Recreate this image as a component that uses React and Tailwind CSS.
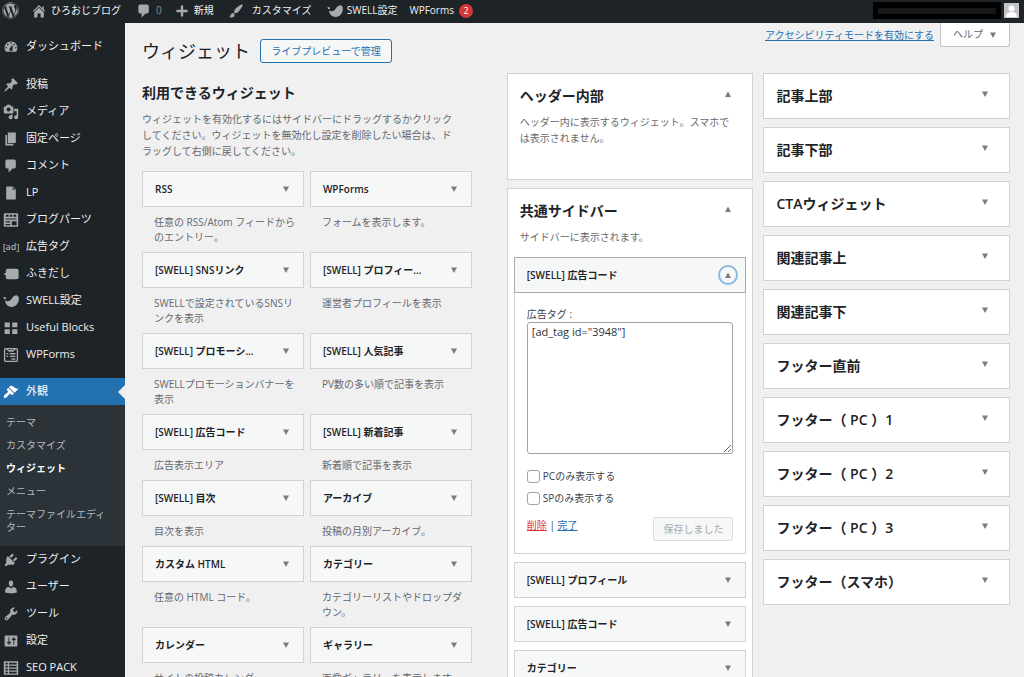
import React, { useState } from "react";
import { FaWordpress } from "react-icons/fa";

const ICONS = {
  dashboard:
    "M3.76 16h12.48c1.1-1.37 1.76-3.11 1.76-5 0-4.42-3.58-8-8-8s-8 3.58-8 8c0 1.89.66 3.63 1.76 5zM10 4c.55 0 1 .45 1 1s-.45 1-1 1-1-.45-1-1 .45-1 1-1zM6 6c.55 0 1 .45 1 1s-.45 1-1 1-1-.45-1-1 .45-1 1-1zm8 0c.55 0 1 .45 1 1s-.45 1-1 1-1-.45-1-1 .45-1 1-1zm-5.37 5.55L12 7v6c0 1.1-.9 2-2 2s-2-.9-2-2c0-.57.24-1.08.63-1.45zM4 10c.55 0 1 .45 1 1s-.45 1-1 1-1-.45-1-1 .45-1 1-1zm12 0c.55 0 1 .45 1 1s-.45 1-1 1-1-.45-1-1 .45-1 1-1z",
  home: "M16 8.5l1.53 1.53-1.06 1.06L10 4.6l-6.47 6.49-1.06-1.06L10 2.5l4 4v-2h2v4zm-6-2.46l6 5.99V18h-4v-5H8v5H4v-5.97z",
  pin: "M10.44 3.02l1.82-1.82 6.36 6.35-1.83 1.82c-1.05-.68-2.48-.57-3.41.36l-.75.75c-.92.93-1.04 2.35-.35 3.41l-1.83 1.82-2.41-2.41-2.8 2.79c-.42.42-3.38 2.71-3.8 2.29s1.86-3.39 2.28-3.81l2.79-2.79L4.1 9.36l1.83-1.82c1.05.69 2.48.57 3.4-.36l.75-.75c.93-.92 1.05-2.35.36-3.41z",
  media:
    "M13 11V4c0-.55-.45-1-1-1h-1.67L9 1H5L3.67 3H2c-.55 0-1 .45-1 1v7c0 .55.45 1 1 1h10c.55 0 1-.45 1-1zM7 4.5c1.38 0 2.5 1.12 2.5 2.5S8.38 9.5 7 9.5 4.5 8.38 4.5 7 5.62 4.5 7 4.5zM14 6h5v10.5c0 1.38-1.12 2.5-2.5 2.5S14 17.88 14 16.5s1.12-2.5 2.5-2.5c.17 0 .34.02.5.05V9h-3V6zm-4 8.05V13h2v3.5c0 1.38-1.12 2.5-2.5 2.5S7 17.88 7 16.5 8.12 14 9.5 14c.17 0 .34.02.5.05z",
  page: "M6 15V2h10v13H6zm-1 1h8v2H3V5h2v11z",
  comment:
    "M5 2h9c1.1 0 2 .9 2 2v7c0 1.1-.9 2-2 2h-2l-5 5v-5H5c-1.1 0-2-.9-2-2V4c0-1.1.9-2 2-2z",
  file: "M12 2l4 4v12H4V2h8zm0 4h3l-3-3v3z",
  parts:
    "M2 1.500h16c.6 0 1 .4 1 1v15c0 .6-.4 1-1 1H2c-.6 0-1-.4-1-1v-15c0-.6.4-1 1-1zM3.500 3.500V6H7V3.500zm5 0V6h3V3.500zm4.500 0V6h3.500V3.500zM3 8v1.300h14V8zM3 11.500V13h6v-1.500zM3 15v1.500h6V15zm8-3.500v5h6v-5z",
  balloon:
    "M6 3.500h11c1.400 0 2.500 1 2.500 2.500v8c0 1.500-1.100 2.500-2.500 2.500H6c-1.500 0-2.500-1-2.500-2.500v-2.500L.5 10l3-1.500V6c0-1.500 1-2.500 2.500-2.500z",
  swell:
    "M.5 5.500c1.200-.8 2.800-.5 3.500 1L2.500 8C1.500 7.500.8 6.600.5 5.500zM2.500 9.500c3.500 1.500 6.500.7 8.500-2.500 1.500-2.700 4-4.300 6.500-4 1.500.2 2.300 1.600 2.300 4C19.800 13 16 17.500 11 17.500c-4.500 0-8-3-8.500-8z",
  blocks:
    "M8.500 9V3H2v6h6.500zM18 9V3h-6.500v6H18zM8.500 17.500v-6H2v6h6.500zm9.500 0v-6h-6.500v6H18z",
  appearance:
    "M14.48 11.06L7.41 3.99l1.5-1.5c.5-.56 2.3-.47 3.51.32 1.21.8 1.43 1.28 2.91 2.1 1.18.64 2.45 1.26 4.45.85zm-.71.71L6.7 4.7 4.93 6.47c-.39.39-.39 1.02 0 1.41l1.06 1.06c.39.39.39 1.03 0 1.42-.6.6-1.43 1.11-2.21 1.69-.35.26-.7.53-1.01.84C1.43 14.23.4 16.08 1.4 17.07c.99 1 2.84-.03 4.18-1.36.31-.31.58-.66.85-1.02.57-.78 1.08-1.61 1.69-2.21.39-.39 1.02-.39 1.41 0l1.06 1.06c.39.39 1.02.39 1.41 0z",
  plugins:
    "M13.11 4.36L9.87 7.6 8 5.73l3.24-3.24c.35-.34 1.05-.2 1.56.32.52.51.66 1.21.31 1.55zm-8 1.77l.91-1.12 9.01 9.01-1.19.84c-.71.71-2.63 1.16-3.82 1.16H6.14L4.9 17.26c-.59.59-1.54.59-2.12 0-.59-.58-.59-1.53 0-2.12l1.24-1.24v-3.88c0-1.13.4-3.19 1.09-3.89zm7.26 3.97l3.24-3.24c.34-.35 1.04-.21 1.55.31.52.51.66 1.21.31 1.55l-3.24 3.25z",
  users:
    "M10 9.25c-2.27 0-2.73-3.44-2.73-3.44C7 4.02 7.82 2 9.97 2c2.16 0 2.98 2.02 2.71 3.81 0 0-.41 3.44-2.68 3.44zm0 2.57L12.72 10c2.39 0 4.52 2.33 4.52 4.53v2.49s-3.65 1.13-7.24 1.13c-3.65 0-7.24-1.13-7.24-1.13v-2.49c0-2.25 1.94-4.48 4.47-4.48z",
  tools:
    "M16.68 9.77c-1.34 1.34-3.3 1.67-4.95.99l-5.41 6.52c-.99.99-2.59.99-3.58 0s-.99-2.59 0-3.57l6.52-5.42c-.68-1.65-.35-3.61.99-4.95 1.28-1.28 3.12-1.62 4.72-1.06l-2.89 2.89 2.82 2.82 2.86-2.87c.53 1.58.18 3.39-1.08 4.65zM3.81 16.21c.4.39 1.04.39 1.43 0 .4-.4.4-1.04 0-1.43-.39-.4-1.03-.4-1.43 0-.39.39-.39 1.03 0 1.43z",
  settings:
    "M18 16V4c0-.55-.45-1-1-1H3c-.55 0-1 .45-1 1v12c0 .55.45 1 1 1h14c.55 0 1-.45 1-1zM8 11h1c.55 0 1 .45 1 1s-.45 1-1 1H8v1.5c0 .28-.22.5-.5.5s-.5-.22-.5-.5V13H6c-.55 0-1-.45-1-1s.45-1 1-1h1V5.5c0-.28.22-.5.5-.5s.5.22.5.5V11zm5-2h-1c-.55 0-1-.45-1-1s.45-1 1-1h1V5.5c0-.28.22-.5.5-.5s.5.22.5.5V7h1c.55 0 1 .45 1 1s-.45 1-1 1h-1v5.5c0 .28-.22.5-.5.5s-.5-.22-.5-.5V9z",
  list: "M1 1.500h18v17H1zm2 2v2h3v-2zm4.500 0v2H17v-2zM3 7.300v2h3v-2zm4.500 0v2H17v-2zM3 11v2h3v-2zm4.500 0v2H17v-2zM3 14.800v2h3v-2zm4.500 0v2H17v-2z",
  plus: "M8.500 3h3v5.500H17v3h-5.500V17h-3v-5.500H3v-3h5.500z",
  brush:
    "M18.33 3.57s.27-.8-.31-1.36c-.53-.52-1.22-.24-1.22-.24-.61.3-5.76 3.47-7.67 5.57-.86.96-2.06 3.79-1.09 4.82.92.98 3.96-.17 4.79-1 2.06-2.06 5.21-7.17 5.5-7.79zM1.4 17.65c2.37-1.56 1.46-3.41 3.23-4.64.93-.65 2.22-.62 3.08.29.63.67.8 2.57-.16 3.46-1.57 1.45-4 1.55-6.15.89z",
};

const Icon = ({ name, className = "" }) => (
  <svg
    viewBox="0 0 20 20"
    fill="currentColor"
    fillRule="evenodd"
    className={`size-4 shrink-0 ${className}`}
    aria-hidden="true"
  >
    <path d={ICONS[name]} />
  </svg>
);

const FormsIcon = () => (
  <svg
    viewBox="0 0 20 20"
    fill="none"
    stroke="currentColor"
    strokeWidth="1.7"
    className="size-4 shrink-0"
    aria-hidden="true"
  >
    <rect x="2" y="2" width="16" height="16" rx="1.5" />
    <path d="M4.500 2.500l4 3 1.500-1.500 1.500 1.500 4-3M4.500 8.500h2M8.500 8.500h7M4.500 11.800h2M8.500 11.800h7M10.500 15h5" />
  </svg>
);

const Arrow = ({ up = false }) => (
  <svg
    viewBox="0 0 8 8"
    className="size-2 shrink-0 fill-[#787c82]"
    aria-hidden="true"
  >
    <path d={up ? "M4 1.500L7 7H1z" : "M4 7L1 1.500h6z"} />
  </svg>
);

const mainMenu = [
  { label: "投稿", icon: "pin" },
  { label: "メディア", icon: "media" },
  { label: "固定ページ", icon: "page" },
  { label: "コメント", icon: "comment" },
  { label: "LP", icon: "file" },
  { label: "ブログパーツ", icon: "parts" },
  { label: "広告タグ", icon: "ad" },
  { label: "ふきだし", icon: "balloon" },
  { label: "SWELL設定", icon: "swell" },
  { label: "Useful Blocks", icon: "blocks" },
  { label: "WPForms", icon: "forms" },
];

const subMenu = [
  "テーマ",
  "カスタマイズ",
  "ウィジェット",
  "メニュー",
  "テーマファイルエディター",
];

const bottomMenu = [
  { label: "プラグイン", icon: "plugins" },
  { label: "ユーザー", icon: "users" },
  { label: "ツール", icon: "tools" },
  { label: "設定", icon: "settings" },
  { label: "SEO PACK", icon: "list" },
];

const availableWidgets = [
  { title: "RSS", text: "任意の RSS/Atom フィードからのエントリー。" },
  { title: "WPForms", text: "フォームを表示します。" },
  { title: "[SWELL] SNSリンク", text: "SWELLで設定されているSNSリンクを表示" },
  { title: "[SWELL] プロフィー...", text: "運営者プロフィールを表示" },
  { title: "[SWELL] プロモーシ...", text: "SWELLプロモーションバナーを表示" },
  { title: "[SWELL] 人気記事", text: "PV数の多い順で記事を表示" },
  { title: "[SWELL] 広告コード", text: "広告表示エリア" },
  { title: "[SWELL] 新着記事", text: "新着順で記事を表示" },
  { title: "[SWELL] 目次", text: "目次を表示" },
  { title: "アーカイブ", text: "投稿の月別アーカイブ。" },
  { title: "カスタム HTML", text: "任意の HTML コード。" },
  { title: "カテゴリー", text: "カテゴリーリストやドロップダウン。" },
  { title: "カレンダー", text: "サイトの投稿カレンダー。" },
  { title: "ギャラリー", text: "画像ギャラリーを表示します。" },
];

const closedAreas = [
  "記事上部",
  "記事下部",
  "CTAウィジェット",
  "関連記事上",
  "関連記事下",
  "フッター直前",
  "フッター（ PC ）1",
  "フッター（ PC ）2",
  "フッター（ PC ）3",
  "フッター（スマホ）",
];

const MenuIcon = ({ name }) => {
  if (name === "ad") {
    return (
      <span className="w-4 shrink-0 flex justify-center text-[9px] font-semibold">
        [ad]
      </span>
    );
  }
  if (name === "forms") return <FormsIcon />;
  return <Icon name={name} />;
};

const MenuItem = ({ label, icon }) => (
  <li>
    <a
      href="#"
      className="flex items-center h-[27px] pl-[3px] gap-[7px] text-[11px] text-[#f0f0f1] whitespace-nowrap"
    >
      <span className="text-[#a7aaad] flex">
        <MenuIcon name={icon} />
      </span>
      {label}
    </a>
  </li>
);

const AdminBar = () => (
  <header className="flex items-center h-[23px] pb-[2px] pl-[2px] pr-[5px] bg-[#1d2327] text-[#f0f0f1] text-[10px] whitespace-nowrap">
    <a href="#" aria-label="WordPress" className="text-[#a7aaad]">
      <FaWordpress className="size-[17px]" />
    </a>
    <a href="#" className="flex items-center gap-1 ml-3">
      <Icon name="home" className="text-[#a7aaad]" />
      <span className="w-[73px]">ひろおじブログ</span>
    </a>
    <a href="#" className="flex items-center gap-1 ml-3 text-[#8c8f94]">
      <Icon name="comment" className="text-[#a7aaad]" />0
    </a>
    <a href="#" className="flex items-center gap-1 ml-3">
      <Icon name="plus" className="text-[#a7aaad]" />
      新規
    </a>
    <a href="#" className="flex items-center gap-2 ml-[14px]">
      <Icon name="brush" className="text-[#a7aaad]" />
      <span className="w-[63px]">カスタマイズ</span>
    </a>
    <a href="#" className="flex items-center gap-1 ml-3">
      <Icon name="swell" className="text-[#a7aaad]" />
      SWELL設定
    </a>
    <a href="#" className="flex items-center gap-[5px] ml-3">
      WPForms
      <span className="size-[14px] rounded-full bg-[#d63638] text-white text-[9px] leading-[14px] text-center">
        2
      </span>
    </a>
    <div className="flex items-center gap-[3px] ml-auto">
      <span className="w-32 h-[17px] bg-black flex items-center justify-center">
        <span className="w-[118px] h-[6px] bg-[#161718]" />
      </span>
      <svg viewBox="0 0 15 15" className="size-[15px]" aria-hidden="true">
        <rect width="15" height="15" fill="#c3c4c7" />
        <circle cx="7.5" cy="5.5" r="3" fill="#fff" />
        <path d="M2 14c0-3.500 2-5 5.500-5s5.500 1.500 5.500 5z" fill="#fff" />
      </svg>
    </div>
  </header>
);

const Sidebar = () => (
  <nav className="w-[125px] shrink-0 bg-[#1d2327] pt-[10px]">
    <ul>
      <MenuItem label="ダッシュボード" icon="dashboard" />
    </ul>
    <ul className="mt-[11px]">
      {mainMenu.map((item) => (
        <MenuItem key={item.label} {...item} />
      ))}
    </ul>
    <a
      href="#"
      className="relative flex items-center mt-[10px] h-[27px] pl-[3px] gap-[7px] bg-[#2271b1] text-[11px] text-white"
    >
      <Icon name="appearance" />
      外観
      <span className="absolute right-0 top-[7px] border-y-[7px] border-r-[7px] border-y-transparent border-r-[#f0f0f1]" />
    </a>
    <ul className="bg-[#2c3338] pt-[6px] pb-[7px]">
      {subMenu.map((label) => (
        <li key={label}>
          <a
            href="#"
            className={`block py-[5px] pl-[6px] pr-3 text-[10px] leading-[13px] ${
              label === "ウィジェット"
                ? "font-semibold text-white"
                : "text-[#b4b9be]"
            }`}
          >
            {label}
          </a>
        </li>
      ))}
    </ul>
    <ul>
      {bottomMenu.map((item) => (
        <MenuItem key={item.label} {...item} />
      ))}
    </ul>
  </nav>
);

const WidgetBar = ({ title }) => (
  <button
    type="button"
    className="flex items-center justify-between w-full h-9 pl-3 pr-[13px] bg-[#f6f7f7] border border-[#d0d2d4] text-[10px] font-semibold text-[#1d2327] whitespace-nowrap"
  >
    {title}
    <Arrow />
  </button>
);

const AreaTitle = ({ title, open = false }) => (
  <div className="flex items-start justify-between pl-3 pr-5">
    <h2 className="text-[14px] leading-5 font-semibold text-[#1d2327]">
      {title}
    </h2>
    <button type="button" aria-label={title} className="pt-1">
      <Arrow up={open} />
    </button>
  </div>
);

const AdCodeWidget = () => {
  const [code, setCode] = useState('[ad_tag id="3948"]');

  return (
    <div>
      <button
        type="button"
        className="flex items-center justify-between w-full h-9 pl-3 pr-[7px] bg-[#f6f7f7] border border-[#a7aaad] text-[10px] font-semibold text-[#1d2327]"
      >
        [SWELL] 広告コード
        <span className="size-5 rounded-full border-2 border-[#8bb9e2] flex items-center justify-center">
          <Arrow up />
        </span>
      </button>
      <form className="border border-t-0 border-[#d0d2d4] px-3 pt-[14px] pb-3 text-[10px] leading-4 text-[#3c434a]">
        <label htmlFor="ad-code" className="block leading-[15px]">
          広告タグ :
        </label>
        <textarea
          id="ad-code"
          value={code}
          onChange={(e) => setCode(e.target.value)}
          className="block w-full h-[132px] px-1 py-px border border-[#a0a3a7] rounded-[3px] text-[11px] leading-4 text-[#2c3338] resize"
        />
        <label className="flex items-center gap-[3px] mt-[14px]">
          <input
            type="checkbox"
            className="appearance-none size-[13px] border border-[#a0a3a7] rounded-[3px] bg-white"
          />
          PCのみ表示する
        </label>
        <label className="flex items-center gap-[3px] mt-[6px]">
          <input
            type="checkbox"
            className="appearance-none size-[13px] border border-[#a0a3a7] rounded-[3px] bg-white"
          />
          SPのみ表示する
        </label>
        <div className="flex items-start justify-between mt-[11px]">
          <div>
            <a href="#" className="underline text-[#d63638]">
              削除
            </a>{" "}
            |{" "}
            <a href="#" className="underline text-[#2271b1]">
              完了
            </a>
          </div>
          <button
            type="button"
            disabled
            className="w-20 h-6 rounded-[2px] border border-[#dcdcde] bg-[#f6f7f7] text-[#a7aaad]"
          >
            保存しました
          </button>
        </div>
      </form>
    </div>
  );
};

const App = () => {
  return (
    <div className="min-h-screen flex flex-col bg-[#f0f0f1] font-['Open_Sans','Noto_Sans_CJK_JP',sans-serif]">
      <AdminBar />
      <div className="flex flex-1">
        <Sidebar />
        <main className="flex-1 min-w-0 pl-[17px] pr-[14px] text-[10px] text-[#646970]">
          <div className="flex items-start justify-between">
            <div className="flex items-center gap-[10px] pt-4 pb-[10px]">
              <h1 className="text-[18px] leading-6 text-[#1d2327]">
                ウィジェット
              </h1>
              <a
                href="#"
                className="flex items-center justify-center w-[132px] h-6 border border-[#2271b1] rounded-[3px] bg-[#f6f7f7] text-[#2271b1]"
              >
                ライブプレビューで管理
              </a>
            </div>
            <div className="flex items-start gap-[6px]">
              <a href="#" className="leading-6 underline text-[#2271b1]">
                アクセシビリティモードを有効にする
              </a>
              <button
                type="button"
                className="flex items-center justify-center gap-[6px] w-[70px] h-6 bg-white border border-t-0 border-[#c3c4c7] rounded-b-[3px]"
              >
                ヘルプ
                <Arrow />
              </button>
            </div>
          </div>

          <div className="flex items-start">
            {/* Available widgets */}
            <section className="w-[38%] pt-[10px]">
              <h2 className="text-[14px] leading-5 font-semibold text-[#1d2327]">
                利用できるウィジェット
              </h2>
              <p className="mt-2 pr-[18px] leading-4">
                ウィジェットを有効化するにはサイドバーにドラッグするかクリックしてください。ウィジェットを無効化し設定を削除したい場合は、ドラッグして右側に戻してください。
              </p>
              <div className="grid grid-cols-2 gap-x-[6px] mt-3">
                {availableWidgets.map((widget) => (
                  <div key={widget.title}>
                    <WidgetBar title={widget.title} />
                    <p className="pt-2 pb-[7px] pl-3 pr-1 leading-[15px]">
                      {widget.text}
                    </p>
                  </div>
                ))}
              </div>
            </section>

            {/* Widget areas */}
            <div className="flex-1 grid grid-cols-2 items-start gap-[10px] ml-[35px]">
              <div className="space-y-2">
                <section className="bg-white border border-[#d0d2d4] pt-3 pb-[33px]">
                  <AreaTitle title="ヘッダー内部" open />
                  <p className="mt-2 pl-3 pr-[15px] leading-4">
                    ヘッダー内に表示するウィジェット。スマホでは表示されません。
                  </p>
                </section>
                <section className="bg-white border border-[#d0d2d4] pt-3 pb-3">
                  <AreaTitle title="共通サイドバー" open />
                  <p className="mt-2 px-3 leading-4">
                    サイドバーに表示されます。
                  </p>
                  <div className="mt-3 px-[6px] space-y-2">
                    <AdCodeWidget />
                    <WidgetBar title="[SWELL] プロフィール" />
                    <WidgetBar title="[SWELL] 広告コード" />
                    <WidgetBar title="カテゴリー" />
                  </div>
                </section>
              </div>
              <div className="space-y-2">
                {closedAreas.map((title) => (
                  <section
                    key={title}
                    className="bg-white border border-[#d0d2d4] py-3"
                  >
                    <AreaTitle title={title} />
                  </section>
                ))}
              </div>
            </div>
          </div>
        </main>
      </div>
    </div>
  );
};

export default App;
